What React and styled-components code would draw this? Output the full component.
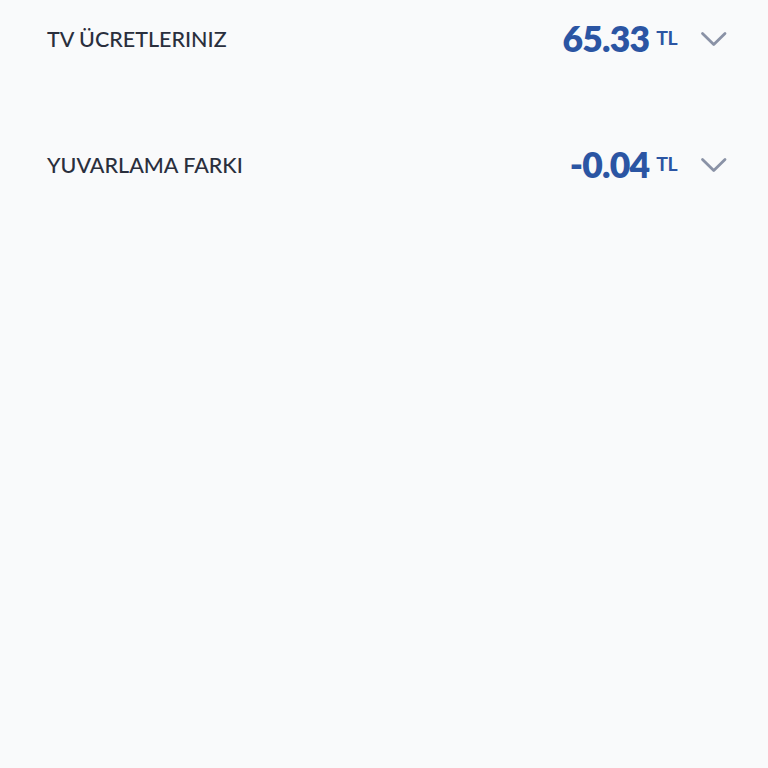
import React, { useState } from "react";
import styled, { createGlobalStyle } from "styled-components";

const GlobalStyle = createGlobalStyle`
  html, body {
    margin: 0;
    padding: 0;
    background: #f9fafb;
  }
  body {
    font-family: "Lato", "Noto Sans", sans-serif;
  }
`;

const items = [
  { id: "tv", title: "TV ÜCRETLERINIZ", amount: "65.33" },
  { id: "round", title: "YUVARLAMA FARKI", amount: "-0.04" },
];

const Chevron = ({ open }) => (
  <svg
    width="28"
    height="16"
    viewBox="0 0 28 16"
    fill="none"
    style={{ transform: open ? "rotate(180deg)" : "none" }}
  >
    <path
      d="M3.5 2.5 L14.75 13.5 L26 2.5"
      stroke="#8a92a6"
      strokeWidth="2.8"
      strokeLinecap="round"
      strokeLinejoin="round"
    />
  </svg>
);

const App = () => {
  const [openId, setOpenId] = useState(null);

  return (
    <Page>
      <GlobalStyle />
      {items.map((item) => (
        <Row
          key={item.id}
          onClick={() => setOpenId(openId === item.id ? null : item.id)}
        >
          <Title>{item.title}</Title>
          <Right>
            <Price>
              <Amount>{item.amount}</Amount>
              <Currency>TL</Currency>
            </Price>
            <Toggle>
              <Chevron open={openId === item.id} />
            </Toggle>
          </Right>
        </Row>
      ))}
    </Page>
  );
};

export default App;

const Page = styled.div`
  width: 768px;
  height: 768px;
  background: #f9fafb;
  padding: 0 41px 0 47px;
  box-sizing: border-box;
  display: flex;
  flex-direction: column;
  gap: 48px;
`;

const Row = styled.div`
  height: 78px;
  display: flex;
  align-items: center;
  justify-content: space-between;
  cursor: pointer;
`;

const Title = styled.div`
  font-family: "Lato", sans-serif;
  font-size: 21.5px;
  font-weight: 500;
  color: #2a2f3d;
  margin-top: -1px;
`;

const Right = styled.div`
  display: flex;
  align-items: center;
`;

const Price = styled.div`
  display: flex;
  align-items: flex-start;
  color: #2b55a3;
  margin-top: -1px;
`;

const Amount = styled.div`
  font-family: "Lato", sans-serif;
  font-size: 35.5px;
  line-height: 1;
  font-weight: 800;
  letter-spacing: -0.8px;
`;

const Currency = styled.div`
  font-family: "Lato", sans-serif;
  font-size: 19.5px;
  line-height: 1;
  font-weight: 700;
  letter-spacing: -0.6px;
  margin-left: 7px;
  margin-top: 7px;
`;

const Toggle = styled.div`
  margin-left: 22px;
  display: flex;
  align-items: center;
`;
